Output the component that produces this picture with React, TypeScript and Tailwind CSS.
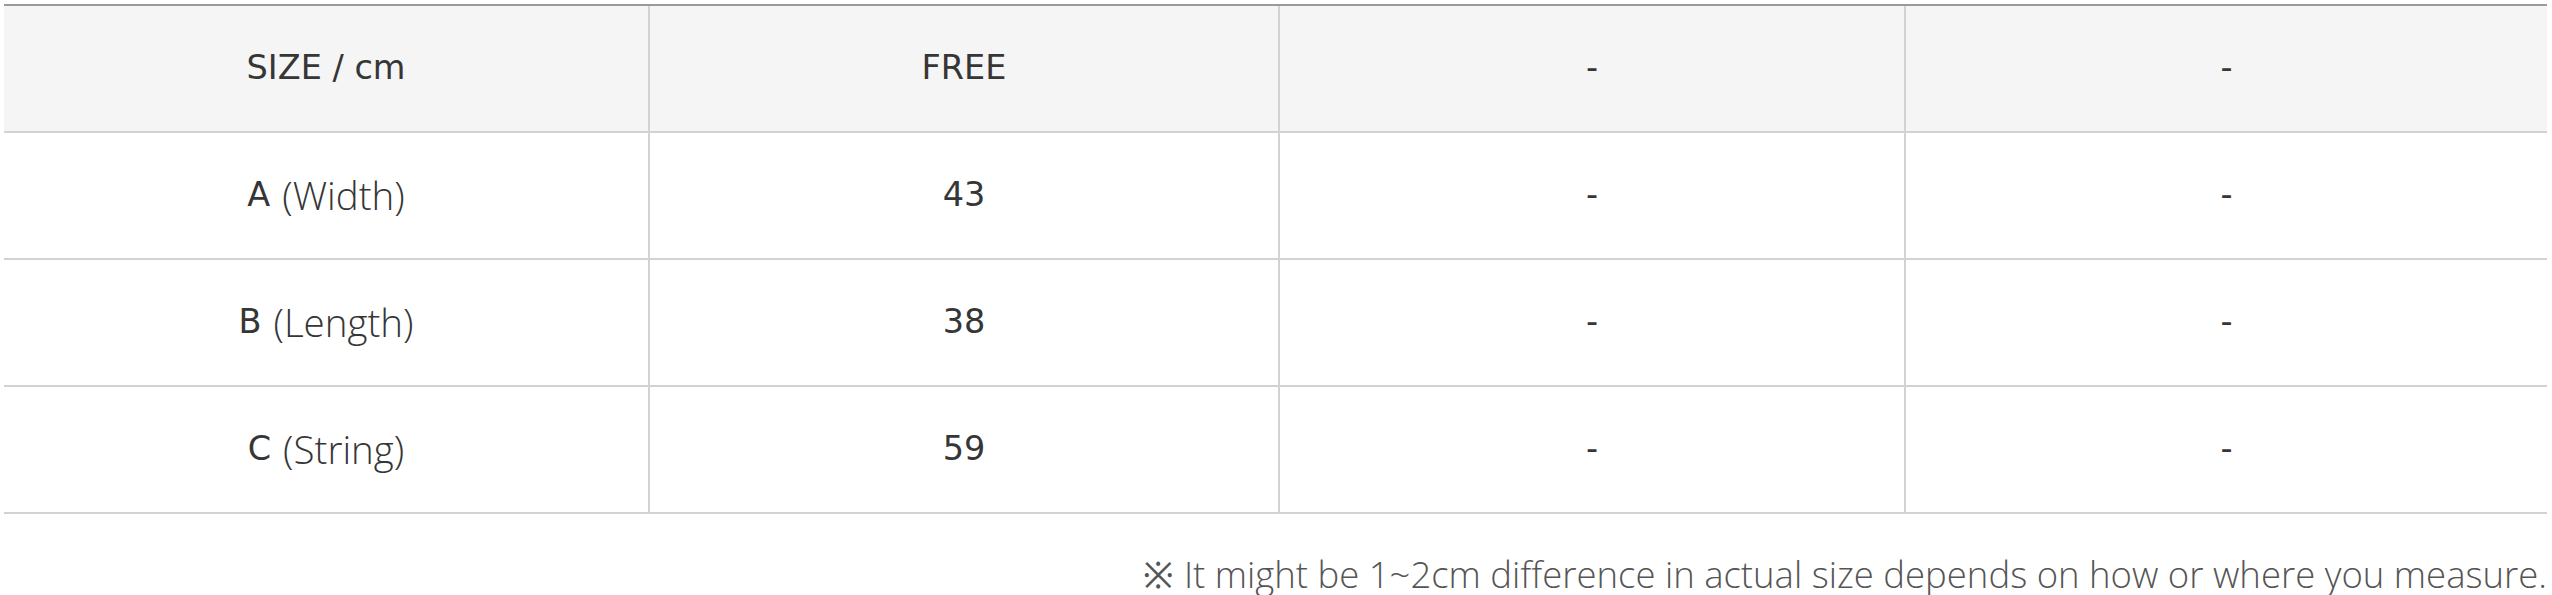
type Row = { label: string; sub?: string; cells: string[] };

const header: Row = { label: "SIZE / cm", cells: ["FREE", "-", "-"] };

const body: Row[] = [
  { label: "A", sub: "(Width)", cells: ["43", "-", "-"] },
  { label: "B", sub: "(Length)", cells: ["38", "-", "-"] },
  { label: "C", sub: "(String)", cells: ["59", "-", "-"] },
];

const main = "font-['DejaVu_Sans',sans-serif]";
const light = "font-['Open_Sans',sans-serif] font-light";

function TableRow({ row, head }: { row: Row; head?: boolean }) {
  return (
    <div
      className={
        "grid grid-cols-[644px_630px_626px_643px] h-[127px] border-b-2 border-[#d2d2d2] text-[#363636] text-[33.5px] " +
        (head ? "bg-[#f5f5f5]" : "bg-white")
      }
    >
      <div className="flex items-center justify-center">
        <span className={main}>{row.label}</span>
        {row.sub && <span className={light + " ml-[12px] text-[38.5px]"}>{row.sub}</span>}
      </div>
      {row.cells.map((c, i) => (
        <div key={i} className="flex items-center justify-center border-l-2 border-[#d2d2d2]">
          <span className={main}>{c}</span>
        </div>
      ))}
    </div>
  );
}

export default function App() {
  return (
    <div className="w-[2552px] h-[595px] bg-white pt-[4px] pl-[4px] pr-[5px] overflow-hidden">
      <div className="border-t-2 border-[#999]">
        <TableRow row={header} head />
        {body.map((r) => (
          <TableRow key={r.label} row={r} />
        ))}
      </div>
      <p className={light + " mt-[42px] text-right text-[36.5px] leading-none text-[#555]"}>
        ※ It might be 1~2cm difference in actual size depends on how or where you measure.
      </p>
    </div>
  );
}
